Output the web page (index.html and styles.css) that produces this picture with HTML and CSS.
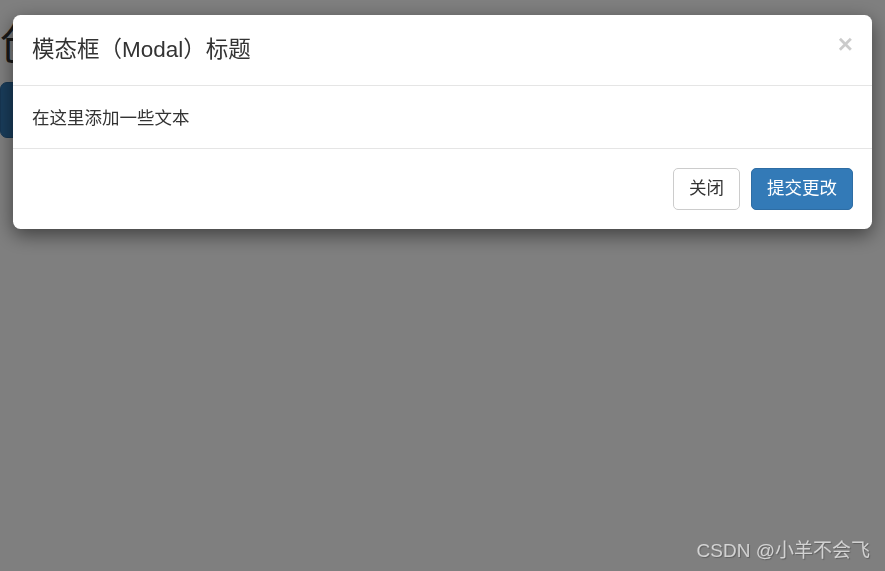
FILE: index.html
```html
<!DOCTYPE html>
<html lang="zh-CN">
<head>
  <meta charset="UTF-8">
  <title>Bootstrap 模态框（Modal）插件</title>
  <link rel="stylesheet" href="styles.css">
</head>
<body>
  <div class="page">
    <h1>创建模态框（Modal）</h1>
    <button class="btn btn-primary btn-lg">开始演示模态框</button>
  </div>

  <div class="modal-backdrop"></div>

  <div class="modal">
    <div class="modal-content">
      <div class="modal-header">
        <button class="close" aria-hidden="true">&times;</button>
        <h4 class="modal-title">模态框（Modal）标题</h4>
      </div>
      <div class="modal-body">在这里添加一些文本</div>
      <div class="modal-footer">
        <button class="btn btn-default">关闭</button>
        <button class="btn btn-primary">提交更改</button>
      </div>
    </div>
  </div>

  <div class="watermark">CSDN @小羊不会飞</div>
</body>
</html>
```

FILE: styles.css
```css
body {
  margin: 0;
  font-family: "Liberation Sans", "Noto Sans CJK SC", sans-serif;
  font-size: 17.5px;
  line-height: 25px;
  color: #333;
  background: #fff;
  overflow: hidden;
}

.page {
  padding-top: 20px;
}

h1 {
  margin: 0;
  font-size: 45px;
  line-height: 50px;
  font-weight: 400;
}

.btn {
  display: inline-block;
  font-family: inherit;
  font-size: 17.5px;
  line-height: 25px;
  padding: 7.5px 15px;
  border: 1.25px solid transparent;
  border-radius: 5px;
  cursor: pointer;
}

.btn-default {
  color: #333;
  background: #fff;
  border-color: #ccc;
}

.btn-primary {
  color: #fff;
  background: #337ab7;
  border-color: #2e6da4;
}

.btn-lg {
  margin-top: 12px;
  padding: 12px 20px;
  font-size: 22.5px;
  line-height: 30px;
  border-radius: 7px;
}

.modal-backdrop {
  position: fixed;
  inset: 0;
  background: rgba(0, 0, 0, 0.5);
}

.modal {
  position: fixed;
  top: 15px;
  left: 13px;
  right: 13px;
}

.modal-content {
  background: #fff;
  border-radius: 7.5px;
  box-shadow: 0 6px 19px rgba(0, 0, 0, 0.5);
}

.modal-header {
  padding: 19px 19px 18.5px;
  border-bottom: 1px solid #e5e5e5;
}

.modal-title {
  margin: 0;
  font-size: 22.5px;
  line-height: 32px;
  font-weight: 400;
}

.close {
  float: right;
  margin-top: -3px;
  padding: 0;
  border: 0;
  background: none;
  font-family: "Liberation Sans", sans-serif;
  font-size: 26px;
  line-height: 26px;
  font-weight: bold;
  color: #000;
  opacity: 0.2;
  cursor: pointer;
}

.modal-body {
  padding: 20px 19px 17.5px;
}

.modal-footer {
  display: flex;
  justify-content: flex-end;
  gap: 11px;
  padding: 18.75px 19px;
  border-top: 1px solid #e5e5e5;
}

.watermark {
  position: fixed;
  right: 15px;
  bottom: 8px;
  font-size: 19px;
  line-height: 24px;
  color: rgba(255, 255, 255, 0.68);
  text-shadow: 1px 1px 1px rgba(0, 0, 0, 0.25);
}
```
